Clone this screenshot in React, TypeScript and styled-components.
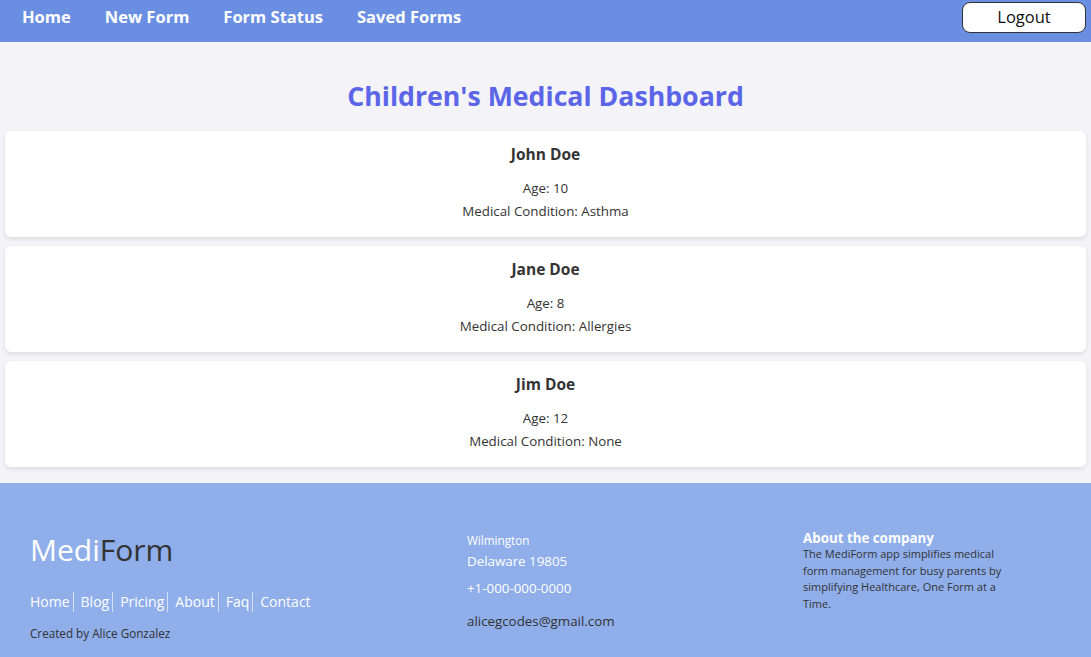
import styled, { createGlobalStyle } from "styled-components";

const GlobalStyle = createGlobalStyle`
body {
  margin: 0;
  background: #f3f3f8;
  font-family: "Open Sans", "Liberation Sans", sans-serif;
  color: #333;
}
`;

const Nav = styled.nav`
  height: 42px;
  box-sizing: border-box;
  background: #6a8fe2;
  display: flex;
  align-items: flex-start;
  justify-content: space-between;
  padding: 2px 5px 0 22px;
`;
const NavLinks = styled.div`
  display: flex;
  gap: 34px;
`;
const NavLink = styled.a`
  color: #fff;
  font-weight: 700;
  font-size: 16.5px;
  line-height: 29px;
  text-decoration: none;
  cursor: pointer;
`;
const LogoutButton = styled.button`
  width: 124px;
  height: 31px;
  background: #fff;
  border: 1px solid #333;
  border-radius: 8px;
  font-family: inherit;
  font-size: 16.5px;
  line-height: 27px;
  color: #111;
  cursor: pointer;
  padding: 0 0 2px;
`;

const Main = styled.main`
  padding: 0 5px 16px;
`;
const Title = styled.h1`
  margin: 0;
  padding: 36px 0 17px;
  text-align: center;
  color: #5b65e8;
  font-size: 26.7px;
  font-weight: 700;
  line-height: 36px;
`;
const CardList = styled.div`
  display: flex;
  flex-direction: column;
  gap: 9px;
`;
const Card = styled.div`
  background: #fff;
  border-radius: 6px;
  box-shadow: 0 2px 4px rgba(0, 0, 0, 0.1);
  text-align: center;
  padding: 12px 0 14px;
`;
const Name = styled.h3`
  margin: 0 0 12px;
  font-size: 15.5px;
  line-height: 22px;
  font-weight: 700;
`;
const Info = styled.p`
  margin: 0;
  font-size: 13.33px;
  line-height: 23px;
`;

const Footer = styled.footer`
  background: #8faeea;
  min-height: 174px;
  display: grid;
  grid-template-columns: 437px 336px 1fr;
  padding: 0 0 0 30px;
`;
const FooterCol = styled.div<{ $top: number }>`
  padding-top: ${(p) => p.$top}px;
`;
const Logo = styled.div`
  font-size: 30px;
  font-weight: 400;
  color: #fff;
  line-height: 40px;
  margin-bottom: 22px;
  span {
    color: #333;
  }
`;
const FooterLinks = styled.div`
  display: flex;
  font-size: 14px;
  line-height: 20px;
`;
const FooterLink = styled.a<{ $last?: boolean }>`
  color: #fff;
  text-decoration: none;
  padding-right: 3px;
  margin-right: 7px;
  border-right: ${(p) => (p.$last ? "none" : "1px solid rgba(255,255,255,0.6)")};
`;
const Credit = styled.p`
  margin: 13px 0 0;
  font-size: 11.7px;
  line-height: 16px;
  color: #333;
`;
const Small = styled.div`
  font-size: 11.7px;
  color: #fff;
  line-height: 16px;
`;
const Contact = styled.div<{ $dark?: boolean; $gap: number }>`
  font-size: 13.33px;
  line-height: 20px;
  color: ${(p) => (p.$dark ? "#333" : "#fff")};
  margin-top: ${(p) => p.$gap}px;
`;
const AboutTitle = styled.h4`
  margin: 0;
  font-size: 13.33px;
  line-height: 16px;
  font-weight: 700;
  color: #fff;
`;
const AboutText = styled.p`
  margin: 0;
  width: 205px;
  font-size: 11px;
  line-height: 16.7px;
  color: #333;
`;

const children = [
  { name: "John Doe", age: 10, condition: "Asthma" },
  { name: "Jane Doe", age: 8, condition: "Allergies" },
  { name: "Jim Doe", age: 12, condition: "None" },
];

const links = ["Home", "Blog", "Pricing", "About", "Faq", "Contact"];

export default function App() {
  return (
    <>
      <GlobalStyle />
      <Nav>
        <NavLinks>
          <NavLink>Home</NavLink>
          <NavLink>New Form</NavLink>
          <NavLink>Form Status</NavLink>
          <NavLink>Saved Forms</NavLink>
        </NavLinks>
        <LogoutButton>Logout</LogoutButton>
      </Nav>
      <Main>
        <Title>Children's Medical Dashboard</Title>
        <CardList>
          {children.map((c) => (
            <Card key={c.name}>
              <Name>{c.name}</Name>
              <Info>Age: {c.age}</Info>
              <Info>Medical Condition: {c.condition}</Info>
            </Card>
          ))}
        </CardList>
      </Main>
      <Footer>
        <FooterCol $top={47}>
          <Logo>
            Medi<span>Form</span>
          </Logo>
          <FooterLinks>
            {links.map((l, i) => (
              <FooterLink key={l} $last={i === links.length - 1}>
                {l}
              </FooterLink>
            ))}
          </FooterLinks>
          <Credit>Created by Alice Gonzalez</Credit>
        </FooterCol>
        <FooterCol $top={49}>
          <Small>Wilmington</Small>
          <Contact $gap={3}>Delaware 19805</Contact>
          <Contact $gap={7}>+1-000-000-0000</Contact>
          <Contact $gap={13} $dark>
            alicegcodes@gmail.com
          </Contact>
        </FooterCol>
        <FooterCol $top={47}>
          <AboutTitle>About the company</AboutTitle>
          <AboutText>
            The MediForm app simplifies medical form management for busy parents by
            simplifying Healthcare, One Form at a Time.
          </AboutText>
        </FooterCol>
      </Footer>
    </>
  );
}
